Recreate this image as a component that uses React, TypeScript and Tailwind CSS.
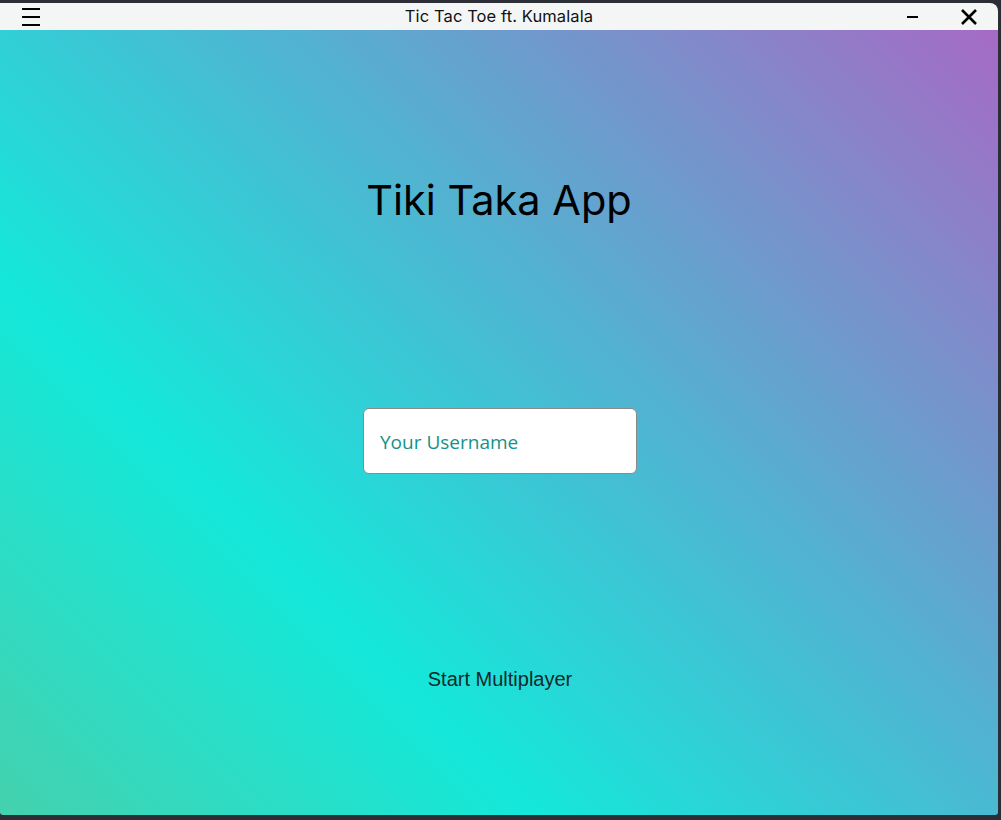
import React from "react";

const TitleBar = () => {
  return (
    <div className="relative flex h-[27px] shrink-0 items-center bg-[#f4f6f6] text-black">
      <div className="ml-[22px] flex w-[18px] flex-col gap-[6px] pt-[1px]">
        <span className="block h-[2px] w-full bg-black" />
        <span className="block h-[2px] w-full bg-black" />
        <span className="block h-[2px] w-full bg-black" />
      </div>
      <div className="absolute inset-x-0 top-0 flex h-full items-center justify-center">
        <span className="text-[16.5px] leading-none tracking-[0.1px] text-[#111]" style={{ fontFamily: "Inter, 'Noto Sans', sans-serif" }}>
          Tic Tac Toe ft. Kumalala
        </span>
      </div>
      <div className="ml-auto mr-[20px] flex items-center gap-[42px]">
        <span className="mt-[1px] block h-[2px] w-[11px] bg-black" />
        <svg width="18" height="18" viewBox="0 0 18 18" className="block">
          <path d="M2 2 L16 16 M16 2 L2 16" stroke="black" strokeWidth="2.6" strokeLinecap="butt" />
        </svg>
      </div>
    </div>
  );
};

export default function App() {
  const [name, setName] = React.useState("");

  return (
    <div className="flex h-[820px] w-[1001px] flex-col bg-[#2b2e35] pt-[3px]">
      <div className="flex h-[812px] w-[998px] flex-col overflow-hidden rounded-tr-[8px] rounded-b-[3px]">
        <TitleBar />
        <main className="flex flex-1 flex-col items-center bg-[linear-gradient(45deg,#45d1ae_0%,#14e8da_30%,#a66ac5_100%)]">
          <h1
            className="mt-[148px] text-[41.5px] leading-[44px] text-black"
            style={{ fontFamily: "Inter, 'Noto Sans', sans-serif" }}
          >
            Tiki Taka App
          </h1>
          <input
            value={name}
            onChange={(e) => setName(e.target.value)}
            placeholder="Your Username"
            className="ml-[2px] mt-[186px] h-[66px] w-[274px] rounded-[6px] border border-[#8a8a8a] bg-white px-[16px] pt-[2px] text-[19px] text-[#14918c] outline-none placeholder:text-[#14918c]"
            style={{ fontFamily: "'Open Sans', 'Noto Sans', sans-serif" }}
          />
          <button
            className="ml-[2px] mt-[195px] text-[20px] leading-none text-[#0f2a2a]"
            style={{ fontFamily: "'Liberation Sans', Arial, sans-serif" }}
          >
            Start Multiplayer
          </button>
        </main>
      </div>
    </div>
  );
}
